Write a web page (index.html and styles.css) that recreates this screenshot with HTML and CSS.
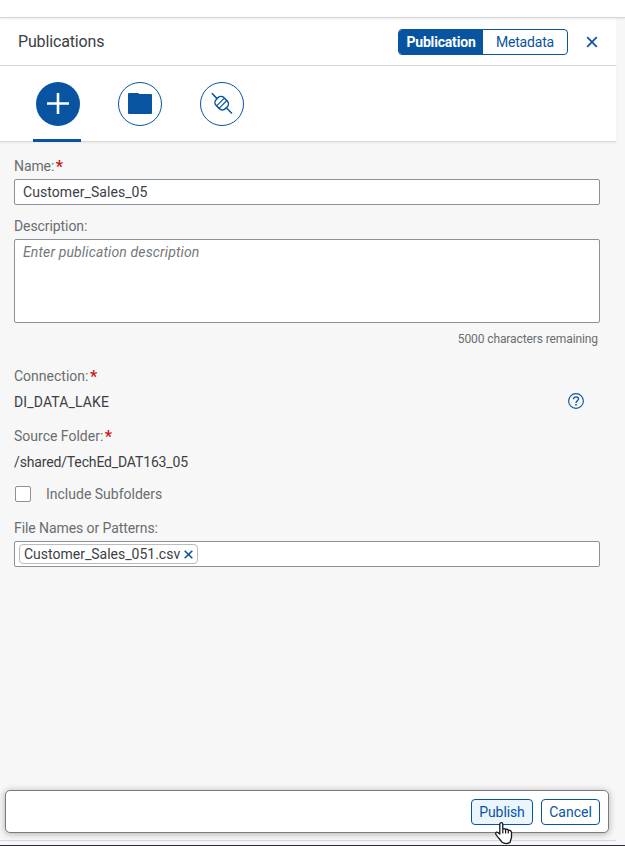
FILE: index.html
```html
<!DOCTYPE html>
<html lang="en">
<head>
<meta charset="utf-8">
<title>Publications</title>
<link rel="stylesheet" href="styles.css">
</head>
<body>
<div class="topbar"></div>
<main class="panel">
  <header class="header">
    <h1 class="title"><span>Publications</span></h1>
    <div class="segmented">
      <button class="segment selected"><span class="t-pub">Publication</span></button>
      <button class="segment"><span class="t-meta">Metadata</span></button>
    </div>
    <button class="close" aria-label="Close">
      <svg width="12" height="12" viewBox="0 0 12 12"><path d="M1.2 1.2 10.8 10.8M10.8 1.2 1.2 10.8" fill="none" stroke="currentColor" stroke-width="1.7"/></svg>
    </button>
  </header>
  <nav class="tabs">
    <button class="tab active" aria-label="New">
      <span class="circle"><svg width="44" height="44" viewBox="0 0 44 44"><path d="M22 11v21M11 21.5h22" fill="none" stroke="#fff" stroke-width="2.6"/></svg></span>
    </button>
    <button class="tab" aria-label="Folder">
      <span class="circle"><svg width="42" height="42" viewBox="0 0 42 42"><path d="M9 11a1 1 0 0 1 1-1h9l1.500 1H32a1 1 0 0 1 1 1v18a1 1 0 0 1-1 1H10a1 1 0 0 1-1-1z" fill="currentColor"/></svg></span>
    </button>
    <button class="tab" aria-label="Connection">
      <span class="circle"><svg width="42" height="42" viewBox="0 0 42 42"><g fill="none" stroke="currentColor" stroke-width="1.500" transform="translate(20.700 20.200) rotate(45)"><path d="M-14 0h7.500M6.500 0h8"/><rect x="-6.500" y="-5.500" width="13" height="11" rx="4.300"/><path d="M-1.700-5.500v11M1.700-5.500v11" stroke-width="1.100"/></g></svg></span>
    </button>
  </nav>
  <form class="form">
    <div class="row label"><span class="t-name">Name:</span><b class="required">*</b></div>
    <div class="field"><span class="t-value">Customer_Sales_05</span></div>
    <div class="row label"><span class="t-desc">Description:</span></div>
    <div class="field area"><span class="t-placeholder">Enter publication description</span></div>
    <div class="counter"><span>5000 characters remaining</span></div>
    <div class="row label"><span class="t-conn">Connection:</span><b class="required">*</b></div>
    <div class="row value"><span class="t-lake">DI_DATA_LAKE</span>
      <svg class="help" width="16" height="16" viewBox="0 0 16 16"><circle cx="8" cy="8" r="7.400" fill="none" stroke="currentColor" stroke-width="1.100"/><path d="M5.600 6.300C5.600 4.700 6.500 3.900 8 3.900s2.500.9 2.500 2.200C10.500 7.700 8 7.900 8 10" fill="none" stroke="currentColor" stroke-width="1.300"/><path d="M7.200 11h1.600v1.500H7.200z" fill="currentColor"/></svg>
    </div>
    <div class="row label"><span class="t-source">Source Folder:</span><b class="required">*</b></div>
    <div class="row value"><span class="t-path">/shared/TechEd_DAT163_05</span></div>
    <div class="row check"><i class="box"></i><span class="t-include">Include Subfolders</span></div>
    <div class="row label"><span class="t-files">File Names or Patterns:</span></div>
    <div class="field tokens">
      <div class="token"><span class="t-token">Customer_Sales_051.csv</span><svg width="9" height="9" viewBox="0 0 9 9"><path d="M.7.700 8.300 8.300M8.300.700.700 8.300" fill="none" stroke="currentColor" stroke-width="1.600"/></svg></div>
    </div>
  </form>
  <footer class="footer">
    <button class="action hover"><span class="t-publish">Publish</span></button>
    <button class="action"><span class="t-cancel">Cancel</span></button>
  </footer>
</main>
<div class="baseline"></div>
<svg class="cursor" width="20" height="25" viewBox="0 0 20 25"><path d="M5.800 13.500V3.200a1.500 1.500 0 0 1 3 0V8q1.600-1 2.800.5 1.700-.8 2.700.6 2.800-.2 3.200 2.400V16c0 2-1.300 3.200-1.300 5.300q-4.200 2.500-8.200 0C6.500 18.500 4 17 2.200 13.800c-.8-1.200-.6-2.300.3-2.600 1.200-.3 2.200.700 3.300 2.300" fill="#fff" stroke="#15171f" stroke-width="1.300" stroke-linejoin="round"/><path d="M8.800 8v4.500M11.600 8.500v4M14.300 9.200v3.300" fill="none" stroke="#15171f" stroke-width="1.200"/></svg>
</body>
</html>
```
FILE: styles.css
```css
* { box-sizing: border-box; }

body {
  margin: 0;
  height: 846px;
  display: flex;
  flex-direction: column;
  background: #f7f7f7;
  color: #3c4044;
  font: 14px/20px Roboto, "Liberation Sans", sans-serif;
  overflow: hidden;
}

button {
  margin: 0;
  padding: 0;
  border: 0;
  background: none;
  color: #0854a0;
  font: inherit;
}

span { white-space: nowrap; }
svg { display: block; flex: none; }

.topbar {
  flex: none;
  height: 18px;
  background: #fff;
  border-bottom: 1px solid #d5d5d5;
  box-shadow: 0 1px 2px rgba(0, 0, 0, .08);
  position: relative;
}

.panel { width: 616px; height: 823px; display: flex; flex-direction: column; border-bottom: 1px solid #d9d9d9; }

.header {
  flex: none;
  height: 48px;
  display: flex;
  align-items: center;
  padding: 0 18px;
  background: #fff;
  border-bottom: 1px solid #d9d9d9;
}

.title { margin: 0 auto 0 0; font-size: 16px; font-weight: 400; letter-spacing: -.15px; }

.segmented {
  width: 170px;
  height: 26px;
  display: flex;
  border: 1px solid #0854a0;
  border-radius: 4px;
  overflow: hidden;
}

.segment { flex: 1; }
.segment.selected { background: #0854a0; color: #fff; font-weight: 700; }
.close { margin-left: 18px; }

.tabs {
  flex: none;
  height: 76px;
  display: flex;
  gap: 34px;
  padding: 16px 33px 0;
  background: #fff;
  border-bottom: 1px solid #d9d9d9;
  box-shadow: 0 1px 2px rgba(0, 0, 0, .06);
}

.tab { width: 48px; height: 60px; display: flex; justify-content: flex-end; align-items: flex-start; padding-right: 1px; }
.tab.active { border-bottom: 3px solid #0854a0; border-radius: 2px 2px 0 0; }
.circle { width: 44px; height: 44px; border: 1px solid #0854a0; border-radius: 50%; }
.active .circle { border: 0; background: #0854a0; }

.form { flex: 1; padding: 12px 16px 0 14px; }
.row { display: flex; align-items: center; }
.label { height: 25px; padding-bottom: 1px; color: #6a6d70; }
.required { margin: 2px 0 0 1.5px; color: #cc1919; font-size: 16px; }

.field {
  height: 26px;
  display: flex;
  align-items: center;
  padding: 0 8px;
  background: #fff;
  border: 1px solid #89919a;
  border-radius: 2px;
}

.field + .label { margin-top: 9px; }
.area { height: 84px; align-items: flex-start; padding-top: 2px; color: #74777a; font-style: italic; }
.counter { height: 41px; padding: 6px 2px 0; text-align: right; color: #6a6d70; font-size: 12px; letter-spacing: -.1px; }
.value { height: 26px; margin-bottom: 9px; }
.help { margin: -2px 16px 0 auto; color: #0854a0; }
.check { height: 16px; margin: 11px 0 14px 1px; color: #6a6d70; }
.box { width: 16px; height: 16px; margin-right: 15px; background: #fff; border: 1px solid #89919a; border-radius: 2px; }
.tokens { padding: 0 4px; }
.token { width: 179px; height: 20px; display: flex; align-items: center; gap: 4px; padding: 0 4px; border: 1px solid #b8bcc0; border-radius: 4px; }
.token svg { color: #0854a0; }

.t-pub, .t-meta { letter-spacing: -.18px; }
.t-value { letter-spacing: .07px; }
.t-desc, .t-files { letter-spacing: -.08px; }
.t-name { letter-spacing: -.1px; }
.t-placeholder { letter-spacing: .13px; }
.t-lake { letter-spacing: .14px; }
.t-path { letter-spacing: -.15px; }
.t-publish { letter-spacing: -.1px; }

.footer {
  flex: none;
  width: 604px;
  height: 43px;
  margin: 0 0 7px 5px;
  display: flex;
  align-items: center;
  justify-content: flex-end;
  gap: 8px;
  padding: 0 8px;
  background: #fff;
  border: 1px solid #7b7b7b;
  border-radius: 5px;
  box-shadow: 0 1px 7px rgba(0, 0, 0, .3);
}

.action { width: 59px; height: 26px; border: 1px solid #0854a0; border-radius: 4px; }
.action.hover { width: 62px; background: #ebf5fe; }

.baseline { flex: none; margin-top: auto; height: 1px; background: #292d38; }
.cursor { position: absolute; left: 494px; top: 821px; }
```
